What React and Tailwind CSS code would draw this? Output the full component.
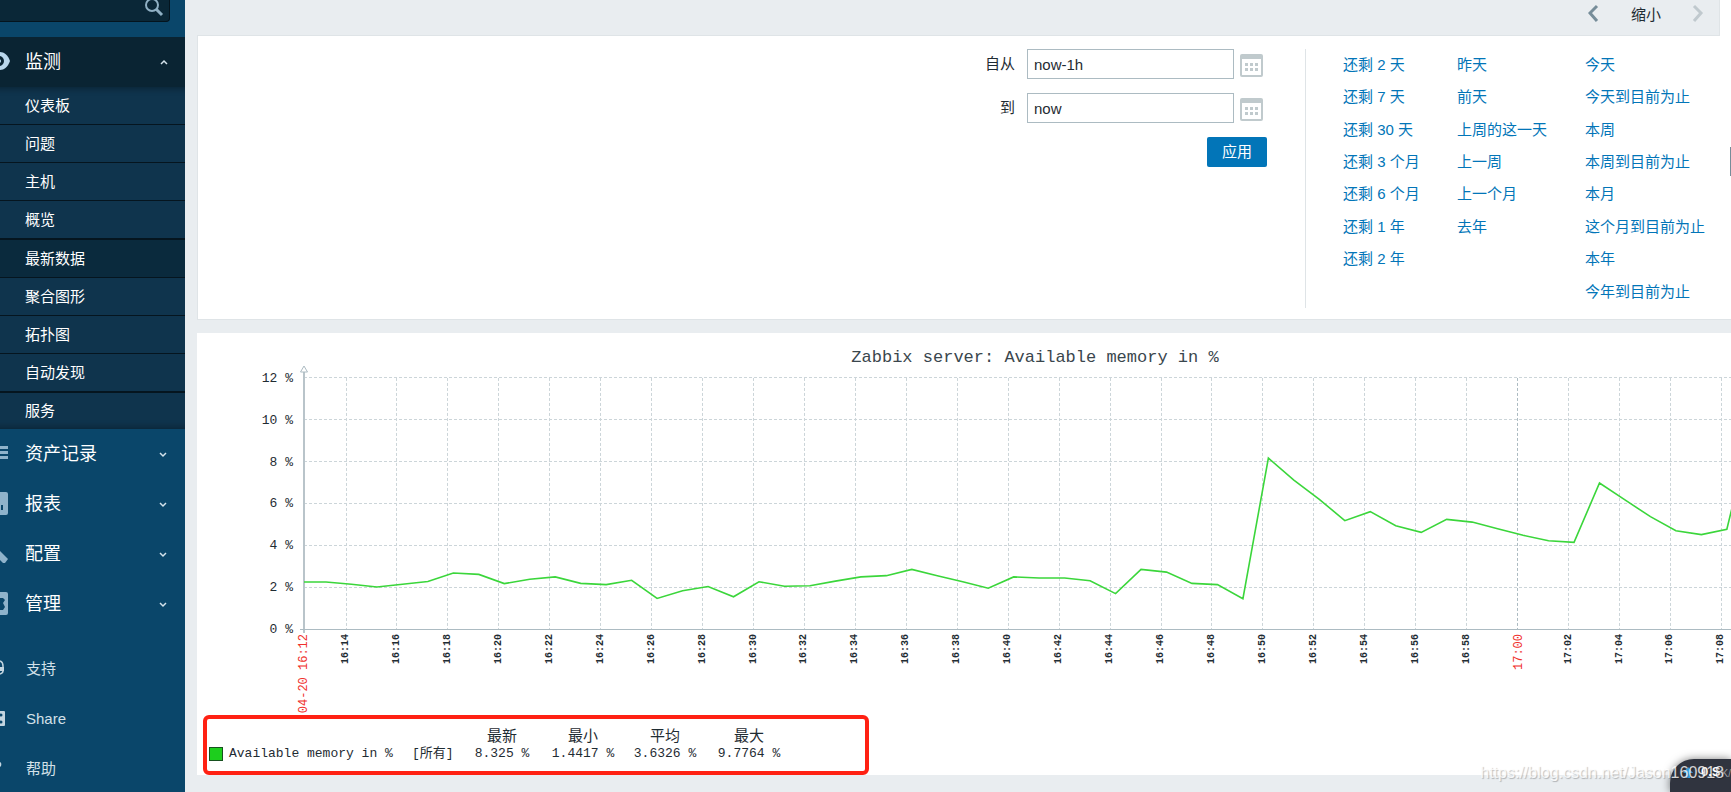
import React, { useState } from "react";

const subMenu = ["仪表板", "问题", "主机", "概览", "最新数据", "聚合图形", "拓扑图", "自动发现", "服务"];

const quickRanges = [
  ["还剩 2 天", "昨天", "今天"],
  ["还剩 7 天", "前天", "今天到目前为止"],
  ["还剩 30 天", "上周的这一天", "本周"],
  ["还剩 3 个月", "上一周", "本周到目前为止"],
  ["还剩 6 个月", "上一个月", "本月"],
  ["还剩 1 年", "去年", "这个月到目前为止"],
  ["还剩 2 年", "", "本年"],
  ["", "", "今年到目前为止"],
];

// one value per minute
const memory = [
  2.25, 2.14, 2.01, 2.14, 2.27, 2.68, 2.61, 2.17, 2.38, 2.49, 2.18, 2.12, 2.33, 1.46, 1.83, 2.03, 1.54, 2.26, 2.04,
  2.07, 2.29, 2.49, 2.55, 2.85, 2.55, 2.26, 1.95, 2.49, 2.44, 2.44, 2.31, 1.69, 2.85, 2.72, 2.18, 2.12, 1.45, 8.17,
  7.12, 6.2, 5.18, 5.61, 4.94, 4.62, 5.24, 5.11, 4.79, 4.48, 4.22, 4.14, 6.98, 6.17, 5.37, 4.7, 4.51, 4.77, 9.78,
];

const EyeIcon = () => (
  <svg className="w-3 h-6" viewBox="0 0 12 24" fill="none">
    <path d="M-9 11C-6 5 -3 2 0 2C4 2 8 5 10 11C8 17 4 20 0 20C-3 20 -6 17 -9 11Z" fill="#b9d6ec" />
    <circle cx="-1" cy="11" r="5" fill="#0a2433" />
    <circle cx="-1" cy="11" r="2" fill="#b9d6ec" />
  </svg>
);

const ListIcon = () => (
  <svg className="w-3 h-6" viewBox="0 0 12 24" fill="#8fb3cb">
    <rect x="0" y="4" width="8" height="3" />
    <rect x="0" y="9" width="8" height="3" />
    <rect x="0" y="14" width="8" height="3" />
  </svg>
);

const ReportIcon = () => (
  <svg className="w-3 h-6" viewBox="0 0 12 24">
    <path d="M0 0H6Q8 0 8 2V21Q8 23 6 23H0Z" fill="#8fb3cb" />
    <rect x="1" y="13" width="2" height="5" fill="#0a466a" />
  </svg>
);

const WrenchIcon = () => (
  <svg className="w-3 h-6" viewBox="0 0 12 24">
    <path d="M0 9L8 17L5 21H3L0 18Z" fill="#8fb3cb" />
  </svg>
);

const AdminIcon = () => (
  <svg className="w-3 h-6" viewBox="0 0 12 24">
    <path d="M0 0H6Q8 0 8 2V21Q8 23 6 23H0Z" fill="#8fb3cb" />
    <path d="M0 6H3L5 8L3 11L5 15L3 18H0Z" fill="#0a466a" />
  </svg>
);

const SupportIcon = () => (
  <svg className="w-3 h-6" viewBox="0 0 12 24" fill="none" stroke="#c3d5e0">
    <path d="M0 4Q3 5 3 9V14Q3 16 0 17" strokeWidth="1.5" />
    <path d="M0 10H4V14H0Z" fill="#c3d5e0" stroke="none" />
  </svg>
);

const ShareIcon = () => (
  <svg className="w-3 h-6" viewBox="0 0 12 24">
    <path d="M0 4H4Q5 4 5 5V18Q5 19 4 19H0Z" fill="#c3d5e0" />
    <circle cx="1" cy="8" r="1.5" fill="#0a466a" />
    <circle cx="1" cy="15" r="1.5" fill="#0a466a" />
  </svg>
);

const HelpIcon = () => (
  <svg className="w-3 h-6" viewBox="0 0 12 24">
    <path d="M0 5Q2 6 1 9L0 10Z" fill="#c3d5e0" />
  </svg>
);

const mainMenu = [
  { label: "资产记录", Icon: ListIcon },
  { label: "报表", Icon: ReportIcon },
  { label: "配置", Icon: WrenchIcon },
  { label: "管理", Icon: AdminIcon },
];

const footerMenu = [
  { label: "支持", Icon: SupportIcon },
  { label: "Share", Icon: ShareIcon },
  { label: "帮助", Icon: HelpIcon },
];

const Chevron = ({ up }) => (
  <svg className="w-2 h-2 ml-auto" viewBox="0 0 8 8" fill="none" stroke="#d5e3ec" strokeWidth="1.5">
    <path d={up ? "M1 6L4 3L7 6" : "M1 3L4 6L7 3"} />
  </svg>
);

const CalendarIcon = () => (
  <svg className="w-6 h-6" viewBox="0 0 24 24">
    <rect x="0" y="1" width="23" height="23" rx="2" fill="#c0cacd" />
    <rect x="2" y="6" width="19" height="16" fill="#fff" />
    <g fill="#c0cacd">
      <rect x="5" y="10" width="3" height="3" />
      <rect x="10" y="10" width="3" height="3" />
      <rect x="15" y="10" width="3" height="3" />
      <rect x="5" y="15" width="3" height="3" />
      <rect x="10" y="15" width="3" height="3" />
      <rect x="15" y="15" width="3" height="3" />
    </g>
  </svg>
);

const Sidebar = () => (
  <nav className="flex flex-col flex-none w-[185px] bg-[#0a466a] text-white overflow-hidden">
    <div className="relative w-[170px] mb-[15px]">
      <input
        type="text"
        aria-label="search"
        className="block w-full h-[22px] px-2 bg-[#0a2737] border-r border-b border-[#04141e] rounded-br outline-none"
      />
      <svg className="absolute right-1 top-0 w-6 h-5" viewBox="0 0 24 20" fill="none" stroke="#8fb0c4">
        <circle cx="10" cy="5" r="6" strokeWidth="2" />
        <path d="M14 9L20 15" strokeWidth="3" />
      </svg>
    </div>
    <button type="button" className="flex flex-none items-center h-[50px] pr-[17px] bg-[#0a2433] text-lg">
      <EyeIcon />
      <span className="ml-[13px]">监测</span>
      <Chevron up />
    </button>
    <ul className="text-[15px] bg-[#0f344d] shadow-[inset_0_10px_6px_-8px_rgba(0,0,0,0.3),inset_0_-10px_6px_-8px_rgba(0,0,0,0.3)]">
      {subMenu.map((item) => {
        let cls = "h-[38px] border-b";
        if (item === "最新数据") cls = "h-[39px] border-y bg-[#0a2a3d]";
        if (item === "服务") cls = "h-[37px] border-t";
        return (
          <li key={item} className={cls + " border-[#05151f]"}>
            <a href="#" className="flex items-center h-full pt-px pl-[25px]">
              {item}
            </a>
          </li>
        );
      })}
    </ul>
    <ul className="text-lg">
      {mainMenu.map(({ label, Icon }) => (
        <li key={label}>
          <button type="button" className="flex items-center w-full h-[50px] pr-[18px]">
            <Icon />
            <span className="ml-[13px]">{label}</span>
            <Chevron />
          </button>
        </li>
      ))}
    </ul>
    <ul className="mt-[15px] text-[15px] text-[#d3e0e8]">
      {footerMenu.map(({ label, Icon }) => (
        <li key={label}>
          <a href="#" className="flex items-center h-[50px]">
            <Icon />
            <span className="ml-[14px]">{label}</span>
          </a>
        </li>
      ))}
    </ul>
  </nav>
);

const TimeField = ({ id, label, value, onChange }) => (
  <div className="flex items-center pr-[3px]">
    <label htmlFor={id} className="mr-3">
      {label}
    </label>
    <input
      id={id}
      type="text"
      value={value}
      onChange={(e) => onChange(e.target.value)}
      className="w-[207px] h-[30px] px-1.5 bg-white border border-[#acbbc2] outline-none"
    />
    <button type="button" aria-label="calendar" className="ml-1.5 mt-[2px]">
      <CalendarIcon />
    </button>
  </div>
);

const TimeFilter = () => {
  const [from, setFrom] = useState("now-1h");
  const [to, setTo] = useState("now");

  return (
    <section className="flex pt-[13px] pb-[11px] bg-white border-b border-l border-[#dfe4e7] text-[15px]">
      <form
        className="flex flex-col flex-1 items-end gap-[14px] pr-[38px] border-r border-[#dfe4e7]"
        onSubmit={(e) => e.preventDefault()}
      >
        <TimeField id="from" label="自从" value={from} onChange={setFrom} />
        <TimeField id="to" label="到" value={to} onChange={setTo} />
        <button type="submit" className="w-[60px] h-[30px] rounded-xs bg-[#0275b8] text-white">
          应用
        </button>
      </form>
      <div className="grid grid-cols-[114px_128px_1fr] grid-rows-8 flex-none w-[425px] h-[259px] pl-[37px] items-center text-[#0275b8]">
        {quickRanges.flat().map((range, i) => (range ? <a key={i} href="#">{range}</a> : <span key={i} />))}
      </div>
    </section>
  );
};

const Chart = () => {
  const left = 107;
  const bottom = 296;
  const step = 50.94;
  const y = (v) => bottom - v * 20.92;
  const ticks = Array.from({ length: 28 }, (_, i) => {
    const minute = 14 + i * 2;
    const hour = 16 + Math.floor(minute / 60);
    return { x: 149 + i * step, label: hour + ":" + String(minute % 60).padStart(2, "0") };
  });
  const points = memory.map((v, i) => 129 + (i * step) / 2 + "," + y(v));

  return (
    <svg className="block w-full h-[382px] overflow-hidden font-['Liberation_Mono',monospace]" fill="#1f2c33">
      <text x="838" y="29" fontSize="17" textAnchor="middle" fill="#3a464d">
        Zabbix server: Available memory in %
      </text>
      {[0, 2, 4, 6, 8, 10, 12].map((v) => (
        <g key={v}>
          {v > 0 && (
            <line x1={left} x2="100%" y1={Math.floor(y(v)) + 0.5} y2={Math.floor(y(v)) + 0.5} stroke="#ccd5d9" strokeDasharray="3 2" />
          )}
          <text x="96" y={y(v) + 4} fontSize="13" textAnchor="end">
            {v} %
          </text>
        </g>
      ))}
      {ticks.map(({ x, label }) => {
        const isHour = label === "17:00";
        const px = Math.floor(x) + 0.5;
        return (
          <g key={label}>
            <line x1={px} x2={px} y1={y(12)} y2={bottom} stroke={isHour ? "#acbbc2" : "#ccd5d9"} strokeDasharray="3 2" />
            <text
              transform={"translate(" + (x + (isHour ? 4 : 2)) + " 301) rotate(-90)"}
              fontSize={isHour ? 12 : 10}
              fontWeight={isHour ? 400 : 700}
              fill={isHour ? "#f0302c" : undefined}
              textAnchor="end"
            >
              {label}
            </text>
          </g>
        );
      })}
      <line x1={left} x2={left} y1="38" y2="300" stroke="#b9c4ca" strokeWidth="2" />
      <line x1="103" x2="100%" y1="296.5" y2="296.5" stroke="#acbbc2" />
      <path d="M103.5 39L107 33L110.5 39Z" fill="#fff" stroke="#acbbc2" />
      <text transform="translate(110 301) rotate(-90)" fontSize="12" fill="#f0302c" textAnchor="end">
        04-20 16:12
      </text>
      <polyline points={[left + "," + y(2.25), ...points].join(" ")} fill="none" stroke="#3bd63b" strokeWidth="1.6" />
    </svg>
  );
};

const Legend = () => (
  <div className="w-[666px] h-[60px] ml-[6px] pt-[10px] pl-[2px] border-4 border-[#ff2113] rounded-md">
    <table className="table-fixed w-[582px] text-[13px] leading-4 text-[#1f2c33] font-['Liberation_Mono','Noto_Sans_CJK_SC',monospace]">
      <colgroup>
        <col className="w-[203px]" />
        <col className="w-[49px]" />
        <col className="w-[82px]" />
        <col className="w-[80px]" />
        <col className="w-[84px]" />
        <col className="w-[84px]" />
      </colgroup>
      <thead>
        <tr className="text-[15px] leading-[17px]">
          <td />
          <td />
          <th className="font-normal">最新</th>
          <th className="font-normal">最小</th>
          <th className="font-normal">平均</th>
          <th className="font-normal">最大</th>
        </tr>
      </thead>
      <tbody>
        <tr className="text-center">
          <td>
            <div className="flex items-center gap-1.5 whitespace-nowrap">
              <span className="w-[14px] h-[14px] bg-[#1dce1d] border border-[#17511f]" />
              Available memory in %
            </div>
          </td>
          <td className="text-left text-[13px] whitespace-nowrap">[所有]</td>
          <td>8.325 %</td>
          <td>1.4417 %</td>
          <td>3.6326 %</td>
          <td>9.7764 %</td>
        </tr>
      </tbody>
    </table>
  </div>
);

const App = () => {
  return (
    <div className="relative flex h-screen overflow-hidden bg-[#e9edf0] text-[#1f2c33] font-['Liberation_Sans','Noto_Sans_CJK_SC',sans-serif]">
      <Sidebar />
      <main className="flex-1 min-w-0 pl-3">
        <div className="flex h-9 bg-white">
          <div className="flex flex-1 items-start justify-end gap-[31px] pt-1 pr-[15px] bg-[#e9edf0] border-r border-b border-[#dfe4e7] text-[15px]">
            <button type="button" aria-label="previous" className="h-[18px]">
              <svg className="w-3 h-[18px]" viewBox="0 0 12 18" fill="none" stroke="#768d99" strokeWidth="3">
                <path d="M9 2L2 9L9 17" />
              </svg>
            </button>
            <button type="button" className="leading-[22px]">缩小</button>
            <button type="button" aria-label="next" className="h-[18px]" disabled>
              <svg className="w-3 h-[18px]" viewBox="0 0 12 18" fill="none" stroke="#c0c9ce" strokeWidth="3">
                <path d="M2 2L9 9L2 17" />
              </svg>
            </button>
          </div>
          <div className="w-[11px]" />
        </div>
        <TimeFilter />
        <section className="mt-[13px] bg-white">
          <Chart />
          <Legend />
        </section>
      </main>
      <div className="absolute right-0 top-[147px] w-px h-[29px] bg-[#768d99]" />
      <div className="absolute right-0 bottom-0 flex w-[61px] h-[33px] pl-[31px] items-center gap-px rounded-tl-3xl bg-[#30343f] shadow-[0_0_8px_rgba(0,0,0,0.5)] overflow-hidden whitespace-nowrap">
        <svg className="absolute left-3 top-2 w-3 h-3" viewBox="0 0 12 12" fill="#38a3e8">
          <path d="M6 0L11 6H8V11H4V6H1Z" />
        </svg>
        <span className="-mt-2 text-[13px] font-bold text-white">0.S</span>
        <span className="-mt-1 text-[10px] text-[#9a9da5]">K/</span>
      </div>
      <div className="absolute right-[7px] bottom-[9px] text-base leading-5 text-white/80 [text-shadow:1px_1px_1px_rgba(0,0,0,0.25)]">
        https://blog.csdn.net/Jason160918
      </div>
    </div>
  );
};

export default App;
